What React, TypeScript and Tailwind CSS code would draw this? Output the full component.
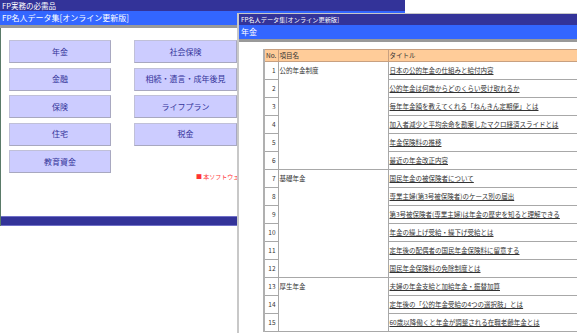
import React from "react";

type Row = { no: number; cat?: string; span?: number; title: string };

const rows: Row[] = [
  { no: 1, cat: "公的年金制度", span: 6, title: "日本の公的年金の仕組みと給付内容" },
  { no: 2, title: "公的年金は何歳からどのくらい受け取れるか" },
  { no: 3, title: "毎年年金額を教えてくれる「ねんきん定期便」とは" },
  { no: 4, title: "加入者減少と平均余命を勘案したマクロ経済スライドとは" },
  { no: 5, title: "年金保険料の推移" },
  { no: 6, title: "最近の年金改正内容" },
  { no: 7, cat: "基礎年金", span: 6, title: "国民年金の被保険者について" },
  { no: 8, title: "専業主婦(第3号被保険者)のケース別の届出" },
  { no: 9, title: "第3号被保険者(専業主婦)は年金の歴史を知ると理解できる" },
  { no: 10, title: "年金の繰上げ受給・繰下げ受給とは" },
  { no: 11, title: "定年後の配偶者の国民年金保険料に留意する" },
  { no: 12, title: "国民年金保険料の免除制度とは" },
  { no: 13, cat: "厚生年金", span: 3, title: "夫婦の年金支給と加給年金・振替加算" },
  { no: 14, title: "定年後の「公的年金受給の4つの選択肢」とは" },
  { no: 15, title: "60歳以降働くと年金が調整される在職老齢年金とは" },
];

const buttons = [
  "年金",
  "社会保険",
  "金融",
  "相続・遺言・成年後見",
  "保険",
  "ライフプラン",
  "住宅",
  "税金",
  "教育資金",
];

export default function App() {
  return (
    <div className="relative w-[577px] h-[333px] overflow-hidden bg-white font-['Noto_Sans_CJK_JP','Noto_Sans',sans-serif]">
      {/* back window */}
      <div className="w-[405px]">
        <div className="h-[11px] bg-[#333399] text-white text-[7.5px] leading-[11px] pl-[2px] whitespace-nowrap">
          FP実務の必需品
        </div>
        <div className="h-[14px] bg-[#3366ff] text-white text-[8px] leading-[14px] pl-[2px] whitespace-nowrap">
          FP名人データ集[オンライン更新版]
        </div>
        <div className="h-[3px] bg-[#999999]" />
        <div className="h-[198px] border-l border-[#5a7a68] flex flex-col">
          <div className="pl-[8px] pt-[12px] grid grid-cols-[102px_103px] gap-x-[23px] gap-y-[4.5px]">
            {buttons.map((b) => (
              <div
                key={b}
                className="h-[23px] bg-[#ccccff] border border-[#a8a8c0] border-t-[#c0c0d8] border-l-[#c0c0d8] flex items-center justify-center text-[8px] text-[#333399] whitespace-nowrap"
              >
                {b}
              </div>
            ))}
          </div>
          <div className="pl-[195px] text-[6px] leading-[8px] text-[#ff3333] whitespace-nowrap">
            ■ 本ソフトウェアのご利用について
          </div>
          <div className="mt-auto h-[10px] bg-[#333399] border-y border-[#7070c8]" />
        </div>
      </div>

      {/* front window */}
      <div className="absolute left-[237px] top-[13px] w-[420px] h-[330px] border-l-2 border-t border-[#c8c8c8] bg-white">
        <div className="h-[11px] bg-[#333399] text-white text-[6.2px] leading-[11px] pl-[2px] whitespace-nowrap">
          FP名人データ集[オンライン更新版]
        </div>
        <div className="h-[14px] bg-[#3366ff] text-white text-[8px] leading-[14px] pl-[2px]">
          年金
        </div>
        <div className="h-[3px] bg-[#999999]" />
        <div className="pl-[24px] pt-[7px]">
          <table className="border-collapse text-[6.5px] text-[#333333] border-l-2 border-[#b0b0b0]">
            <thead>
              <tr className="bg-[#ffcc99]">
                <th className="w-[14px] p-0 font-normal text-left pl-[1px] leading-[11px] border border-[#c8a080] whitespace-nowrap">
                  No.
                </th>
                <th className="w-[110px] p-0 font-normal text-left pl-[1px] leading-[11px] border border-[#c8a080]">
                  項目名
                </th>
                <th className="w-[260px] p-0 font-normal text-left pl-[1px] leading-[11px] border border-[#c8a080]">
                  タイトル
                </th>
              </tr>
            </thead>
            <tbody>
              {rows.map((r) => (
                <tr key={r.no}>
                  <td className="p-0 text-right pr-[2px] leading-[17px] border border-[#a8a8a8] align-middle">
                    {r.no}
                  </td>
                  {r.cat && (
                    <td
                      rowSpan={r.span}
                      className="p-0 align-top pl-[1px] leading-[17px] border border-[#a8a8a8] whitespace-nowrap"
                    >
                      {r.cat}
                    </td>
                  )}
                  <td className="p-0 pl-[1px] leading-[17px] border border-[#a8a8a8] whitespace-nowrap">
                    <span className="underline underline-offset-1">{r.title}</span>
                  </td>
                </tr>
              ))}
            </tbody>
          </table>
        </div>
      </div>
    </div>
  );
}
